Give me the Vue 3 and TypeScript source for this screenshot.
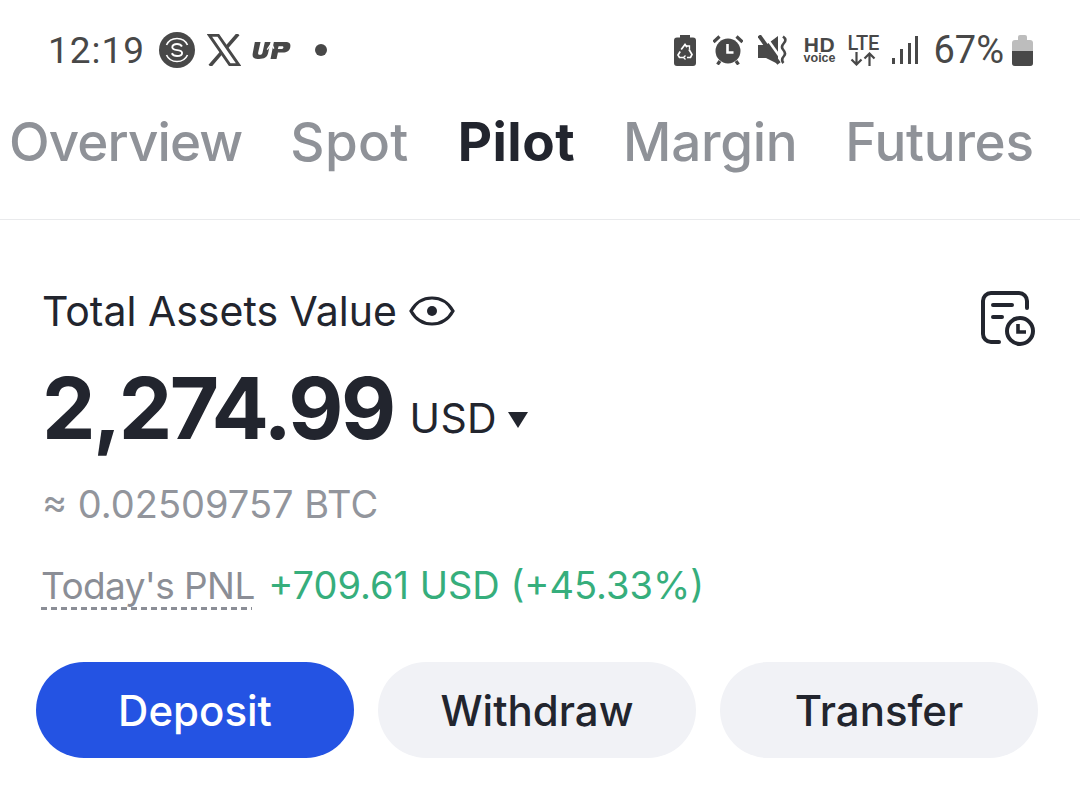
<script setup lang="ts">
const tabs: { label: string; active?: boolean }[] = [
  { label: 'Overview' },
  { label: 'Spot' },
  { label: 'Pilot', active: true },
  { label: 'Margin' },
  { label: 'Futures' }
]
const actions: { label: string; primary?: boolean }[] = [
  { label: 'Deposit', primary: true },
  { label: 'Withdraw' },
  { label: 'Transfer' }
]
</script>

<template>
  <div class="page">
    <header class="status">
      <div class="status-left">
        <span class="time">12:19</span>
        <svg class="ic-s" viewBox="0 0 36 36" width="36" height="36">
          <circle cx="18" cy="18" r="18" fill="#484848" />
          <path d="M7.500 13C9.500 8.500 14 6.500 18 6.500s8.500 2 10.500 6.500M7.500 23C9.500 27.500 14 29.500 18 29.500s8.500-2 10.500-6.500" fill="none" stroke="#fff" stroke-width="1.600" />
          <path d="M23 14.500C22 12.800 20.300 12 18 12c-2.800 0-4.700 1.300-4.700 3.200 0 4.300 9.800 1.600 9.800 5.700 0 1.900-2.100 3.100-5 3.100-2.500 0-4.300-.9-5.300-2.700" fill="none" stroke="#fff" stroke-width="1.900" />
        </svg>
        <svg class="ic-x" viewBox="0 0 36 34" width="34" height="32">
          <path d="M2.500 1.500h9.500L33.500 32.500H24Z" fill="none" stroke="#484848" stroke-width="3" />
          <path d="M33 0 20.500 14.500M15.500 19.500 3 34" fill="none" stroke="#484848" stroke-width="3.800" />
        </svg>
        <svg class="ic-up" viewBox="0 0 42 20" width="40" height="19">
          <path d="M4 1h6L7.500 12c-.3 1.500.2 2.500 1.800 2.500s2.500-1 2.800-2.500L14.500 1h6l-2.600 12c-.8 4-4 6-9.500 6S1 17 1.800 13Z" fill="#484848" />
          <path d="M24 1h12c4.500 0 6 2 5.300 5.500-.7 3.600-3.500 5.500-8 5.500h-5l-1.500 7h-6.300Zm5 4.500-.8 3h3.500c1.300 0 2-.5 2.300-1.500.2-1-.3-1.500-1.600-1.500Z" fill="#484848" />
          <path d="M17 9 21.500 2.500 24 8" fill="none" stroke="#fff" stroke-width="1.400" />
        </svg>
        <span class="dot"></span>
      </div>
      <div class="status-right">
        <svg viewBox="0 0 22 31" width="22" height="31">
          <path d="M6 0h10v2.500h3a3 3 0 0 1 3 3V28a3 3 0 0 1-3 3H3a3 3 0 0 1-3-3V5.500a3 3 0 0 1 3-3h3Z" fill="#484848" />
          <path d="M7.200 14.500 11 9.500l2 2.800M15 14.500l3 5-1.500 3H13M9.500 22.500H5.500L4 20l2.200-3.500" fill="none" stroke="#fff" stroke-width="1.700" />
          <path d="M12 11h3.500v3.500M11.500 20.500l-2 2 2 2" fill="none" stroke="#fff" stroke-width="1.300" />
        </svg>
        <svg class="alarm" viewBox="0 0 30 30" width="30" height="30">
          <circle cx="15" cy="16" r="12.500" fill="#484848" />
          <path d="M.5 7 6.500 1.500M29.500 7 23.500 1.500M7 26l-2.500 3.500M23 26l2.500 3.500" stroke="#484848" stroke-width="3.200" fill="none" />
          <path d="M14.500 9v8.500h6" stroke="#fff" stroke-width="2.600" fill="none" />
        </svg>
        <svg class="mute" viewBox="0 0 30 30" width="30" height="30">
          <path d="M0 10h8L20 1v28L8 23H0Z" fill="#484848" />
          <path d="M5 -2 25 26" stroke="#fff" stroke-width="2.600" />
          <path d="M1 .5 21 28.500" stroke="#484848" stroke-width="4" />
          <path d="M25 1.500c3 2.200 3 4.300 1 6.500s-3 4.300-1 6.500 3 4.300 1 6.500-3 4.300-.5 7" fill="none" stroke="#484848" stroke-width="2.600" />
        </svg>
        <span class="hd"><b>HD</b><small>voice</small></span>
        <span class="lte">
          <b>LTE</b>
          <svg viewBox="0 0 28 14" width="28" height="14">
            <path d="M7.500 0v12.500M2.500 7.500 7.500 12.500 12.500 7.500M20.500 14V1.500M15.500 6.500 20.500 1.500 25.500 6.500" fill="none" stroke="#484848" stroke-width="2.200" />
          </svg>
        </span>
        <span class="signal"><i></i><i></i><i></i><i></i></span>
        <span class="pct">67%</span>
        <span class="battery"><span class="fill"></span></span>
      </div>
    </header>

    <nav class="tabs">
      <span v-for="t in tabs" :key="t.label" class="tab" :class="{ active: t.active }">{{ t.label }}</span>
    </nav>

    <main class="content">
      <div class="title-row">
        <div class="title">
          <span>Total Assets Value</span>
          <svg viewBox="0 0 46 32" width="46" height="32">
            <path d="M2 16C7 7 14 3 23 3s16 4 21 13c-5 9-12 13-21 13S7 25 2 16Z" fill="none" stroke="#22252e" stroke-width="3.200" />
            <circle cx="23" cy="16" r="5" fill="#22252e" />
          </svg>
        </div>
        <svg class="history" viewBox="0 0 56 56" width="56" height="56">
          <path d="M19 52H11a8 8 0 0 1-8-8V11a8 8 0 0 1 8-8h28a8 8 0 0 1 8 8v7" fill="none" stroke="#22252e" stroke-width="4" stroke-linecap="round" />
          <path d="M13 15h19M13 27h9" fill="none" stroke="#22252e" stroke-width="4" stroke-linecap="round" />
          <circle cx="40" cy="41" r="13" fill="none" stroke="#22252e" stroke-width="4" />
          <path d="M38 34v8h8" fill="none" stroke="#22252e" stroke-width="3.600" />
        </svg>
      </div>

      <div class="value-row">
        <span class="value">2,274.99</span>
        <span class="unit">USD</span>
        <span class="caret"></span>
      </div>

      <div class="btc">≈ 0.02509757 BTC</div>

      <div class="pnl">
        <span class="pnl-label">Today's PNL</span>
        <span class="pnl-value">+709.61 USD (+45.33%)</span>
      </div>

      <div class="actions">
        <button v-for="a in actions" :key="a.label" class="btn" :class="{ primary: a.primary }">{{ a.label }}</button>
      </div>
    </main>
  </div>
</template>

<style>
html, body { margin: 0; background: #fff; }
</style>

<style scoped>
.page {
  width: 1080px;
  height: 803px;
  overflow: hidden;
  background: #fff;
  font-family: Inter, "Liberation Sans", sans-serif;
  color: #22252e;
  box-sizing: border-box;
}
.status {
  height: 100px;
  box-sizing: border-box;
  padding: 0 47px 0 48px;
  display: flex;
  align-items: center;
  justify-content: space-between;
  color: #484848;
  font-family: Roboto, sans-serif;
}
.status-left, .status-right { display: flex; align-items: center; }
.time { font-size: 37px; letter-spacing: 1px; margin-right: 14px; }
.ic-x { margin-left: 12px; }
.ic-up { margin-left: 10px; }
.dot { width: 12px; height: 12px; border-radius: 50%; background: #484848; margin-left: 24px; }
.alarm { margin-left: 17px; }
.mute { margin-left: 15px; }
.hd { display: flex; flex-direction: column; align-items: center; margin-left: 16px; font-family: "Liberation Sans", sans-serif; }
.hd b { font-size: 21px; line-height: 16px; letter-spacing: 0.6px; }
.hd small { font-size: 12.500px; line-height: 11px; font-weight: 700; }
.lte { display: flex; flex-direction: column; align-items: center; margin-left: 12px; }
.lte b { font-size: 20px; line-height: 18px; font-weight: 500; }
.signal { display: flex; align-items: flex-end; gap: 4.700px; height: 28px; margin-left: 13px; }
.signal i { width: 3px; background: #484848; display: block; }
.signal i:nth-child(1) { height: 6px; }
.signal i:nth-child(2) { height: 15px; }
.signal i:nth-child(3) { height: 21px; }
.signal i:nth-child(4) { height: 28px; }
.pct { font-size: 38px; margin-left: 15px; }
.battery { width: 21px; height: 26px; margin: 5px 0 0 8px; border-radius: 3px; background: #bdbdbd; position: relative; display: block; }
.battery::before { content: ""; position: absolute; left: 6px; top: -5px; width: 9px; height: 5px; border-radius: 2px 2px 0 0; background: #bdbdbd; }
.battery .fill { position: absolute; left: 0; right: 0; bottom: 0; height: 15px; background: #484848; border-radius: 0 0 3px 3px; }
.tabs {
  height: 120px;
  box-sizing: border-box;
  padding: 11px 0 0 9px;
  display: flex;
  gap: 48px;
  align-items: flex-start;
  border-bottom: 1px solid #e9eaec;
  font-size: 53px;
  line-height: 62px;
  letter-spacing: -0.3px;
  color: #8f9298;
}
.tab { font-weight: 450; }
.tab:first-child { letter-spacing: -0.9px; }
.tab:nth-child(2) { letter-spacing: 0.3px; margin-right: 1px; }
.tab.active { color: #22252e; font-weight: 700; letter-spacing: 0.5px; }
.content { padding: 69px 42px 0; }
.title-row { display: flex; justify-content: space-between; align-items: flex-start; height: 58px; }
.title { display: flex; align-items: center; gap: 12px; font-size: 41px; line-height: 48px; margin-top: -2px; }
.history { margin: 1px 2px 0 0; }
.value-row { display: flex; align-items: flex-end; height: 88px; margin-top: 18px; }
.value { font-size: 85px; font-weight: 700; line-height: 88px; letter-spacing: -2.600px; }
.unit { font-size: 41px; font-weight: 400; line-height: 48px; margin: 0 0 11px 16px; letter-spacing: 0.4px; }
.caret { width: 0; height: 0; border-left: 10.500px solid transparent; border-right: 10.500px solid transparent; border-top: 16px solid #22252e; margin: 0 0 25px 11px; }
.btc { font-size: 38px; color: #92959c; line-height: 46px; margin-top: 28px; }
.pnl { display: flex; align-items: baseline; margin-top: 35px; font-size: 37px; line-height: 46px; }
.pnl-label { color: #8b8e96; position: relative; letter-spacing: -0.6px; margin-left: -1px; }
.pnl-label::after {
  content: "";
  position: absolute;
  left: 0;
  right: 3px;
  bottom: -1px;
  height: 3px;
  background: repeating-linear-gradient(90deg, #8b8e96 0 6px, transparent 6px 10px);
}
.pnl-value { font-size: 38px; color: #36ae7c; margin-left: 13.500px; }
.actions { display: flex; gap: 24px; margin: 53px 0 0 -6px; }
.btn {
  width: 318px;
  height: 96px;
  border: 0;
  border-radius: 48px;
  background: #f1f2f6;
  color: #22252e;
  font: 450 42px Inter, sans-serif;
}
.btn.primary { background: #2453e3; color: #fff; }
</style>
